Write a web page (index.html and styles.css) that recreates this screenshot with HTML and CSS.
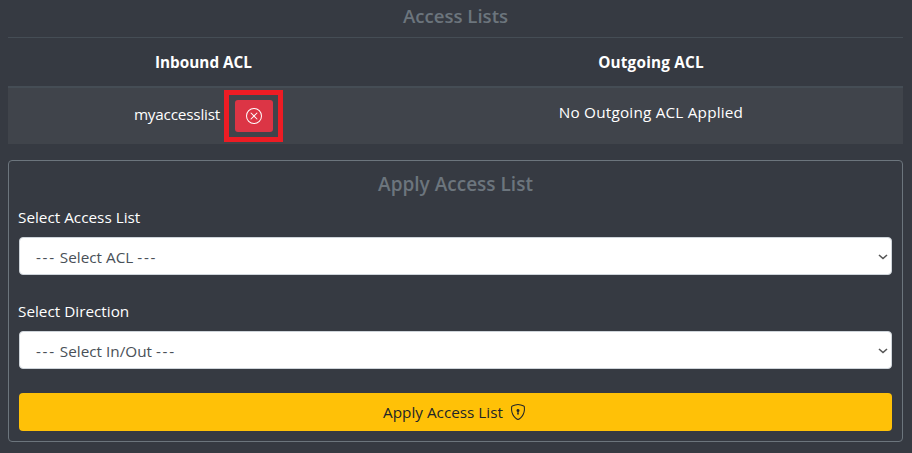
FILE: index.html
```
<!DOCTYPE html>
<html lang="en">
<head>
<meta charset="utf-8">
<title>Access Lists</title>
<link rel="stylesheet" href="styles.css">
</head>
<body>
<h5 class="title">Access Lists</h5>
<table class="acl-table">
  <thead>
    <tr><th class="inbound">Inbound ACL</th><th class="outgoing">Outgoing ACL</th></tr>
  </thead>
  <tbody>
    <tr>
      <td>
        <div class="entry">
          <span class="entry-name">myaccesslist</span>
          <button class="btn-remove" type="button" aria-label="Remove">
            <svg width="16" height="16" viewBox="0 0 16 16" fill="currentColor"><path d="M8 15A7 7 0 1 1 8 1a7 7 0 0 1 0 14zm0 1A8 8 0 1 0 8 0a8 8 0 0 0 0 16z"/><path d="M4.646 4.646a.5.5 0 0 1 .708 0L8 7.293l2.646-2.647a.5.5 0 0 1 .708.708L8.707 8l2.647 2.646a.5.5 0 0 1-.708.708L8 8.707l-2.646 2.647a.5.5 0 0 1-.708-.708L7.293 8 4.646 5.354a.5.5 0 0 1 0-.708z"/></svg>
            <span class="highlight"></span>
          </button>
        </div>
      </td>
      <td><span class="none-applied">No Outgoing ACL Applied</span></td>
    </tr>
  </tbody>
</table>
<form class="panel">
  <h5 class="title panel-title">Apply Access List</h5>
  <label id="acl-label">Select Access List</label>
  <div class="select" role="combobox" tabindex="0" aria-labelledby="acl-label">
    <span><span class="dashes">---</span> Select ACL <span class="dashes">---</span></span>
    <svg width="10" height="6" viewBox="0 0 10 6"><path d="M1 1l4 3.5L9 1"/></svg>
  </div>
  <label id="dir-label">Select Direction</label>
  <div class="select" role="combobox" tabindex="0" aria-labelledby="dir-label">
    <span><span class="dashes">---</span> Select In/Out <span class="dashes">---</span></span>
    <svg width="10" height="6" viewBox="0 0 10 6"><path d="M1 1l4 3.5L9 1"/></svg>
  </div>
  <button class="btn-apply" type="button"><span>Apply Access List</span>
    <svg width="16" height="16" viewBox="0 0 16 16" fill="currentColor"><path d="M5.338 1.59a61.44 61.44 0 0 0-2.837.856.481.481 0 0 0-.328.39c-.554 4.157.726 7.19 2.253 9.188a10.725 10.725 0 0 0 2.287 2.233c.346.244.652.42.893.533.12.057.218.095.293.118a.55.55 0 0 0 .101.025.615.615 0 0 0 .1-.025c.076-.023.174-.061.294-.118.24-.113.547-.29.893-.533a10.726 10.726 0 0 0 2.287-2.233c1.527-1.997 2.807-5.031 2.253-9.188a.48.48 0 0 0-.328-.39c-.651-.213-1.75-.56-2.837-.855C9.552 1.29 8.531 1.067 8 1.067c-.53 0-1.552.223-2.662.524zM5.072.56C6.157.265 7.31 0 8 0s1.843.265 2.928.56c1.11.3 2.229.655 2.887.87a1.54 1.54 0 0 1 1.044 1.262c.596 4.477-.787 7.795-2.465 9.99a11.775 11.775 0 0 1-2.517 2.453 7.159 7.159 0 0 1-1.048.625c-.28.132-.581.24-.829.24s-.548-.108-.829-.24a7.158 7.158 0 0 1-1.048-.625 11.777 11.777 0 0 1-2.517-2.453C1.928 10.487.545 7.169 1.141 2.692A1.54 1.54 0 0 1 2.185 1.43 62.456 62.456 0 0 1 5.072.56z"/><path d="M9.5 6.5a1.5 1.5 0 0 1-1 1.415l.385 1.99a.5.5 0 0 1-.491.595h-.788a.5.5 0 0 1-.49-.595l.384-1.99a1.5 1.5 0 1 1 2-1.415z"/></svg>
  </button>
</form>
</body>
</html>
```
FILE: styles.css
```
* { box-sizing: border-box; }
body {
  margin: 0;
  padding: 4px 9px 0 8px;
  height: 453px;
  overflow: hidden;
  background: #363a42;
  color: #fff;
  font: 15.3px/24px "Open Sans", "Noto Sans", sans-serif;
}
.title {
  margin: 0;
  height: 33px;
  font-size: 18.6px;
  font-weight: 600;
  line-height: 24px;
  text-align: center;
  color: #6c757d;
}
.panel-title { font-size: 19px; }
.acl-table {
  width: 100%;
  table-layout: fixed;
  border-collapse: separate;
  border-spacing: 0;
  text-align: center;
}
.acl-table th {
  height: 51px;
  padding: 12px;
  border-top: 1px solid #454d55;
  border-bottom: 2px solid #454d55;
  font-weight: 700;
}
.inbound { width: 391px; }
.outgoing { letter-spacing: 0.2px; }
.acl-table td {
  height: 56px;
  padding: 12px;
  vertical-align: top;
  background: #40444b;
}
.none-applied { letter-spacing: 0.2px; }
.entry { display: flex; justify-content: center; gap: 15px; line-height: 28px; }
.entry-name { letter-spacing: -0.2px; }
.btn-remove {
  position: relative;
  display: flex;
  align-items: center;
  justify-content: center;
  width: 38px;
  height: 32px;
  padding: 0;
  border: 0;
  border-radius: 3px;
  background: #dc3545;
  color: #fff;
}
.highlight { position: absolute; inset: -10px -10px -10px -11px; border: 5px solid #ed1c24; }
.panel {
  display: flex;
  flex-direction: column;
  height: 282px;
  margin-top: 16px;
  padding: 11px 10px 10px;
  border: 1px solid #6c757d;
  border-radius: 4px;
}
label { align-self: flex-start; height: 32px; margin-left: -1px; line-height: 24px; }
.select {
  display: flex;
  align-items: center;
  justify-content: space-between;
  height: 38px;
  margin-bottom: 24px;
  padding: 2px 3px 0 16px;
  border: 1px solid #ced4da;
  border-radius: 4px;
  background: #fff;
  color: #495057;
}
.dashes { letter-spacing: 1.7px; }
.select svg { margin-top: -1px; fill: none; stroke: #555; stroke-width: 1.6; }
.btn-apply {
  display: flex;
  align-items: center;
  justify-content: center;
  gap: 7px;
  flex: none;
  height: 38px;
  padding: 0 2px 0 0;
  border: 0;
  border-radius: 4px;
  background: #ffc107;
  color: #212529;
  font: inherit;
}
```
